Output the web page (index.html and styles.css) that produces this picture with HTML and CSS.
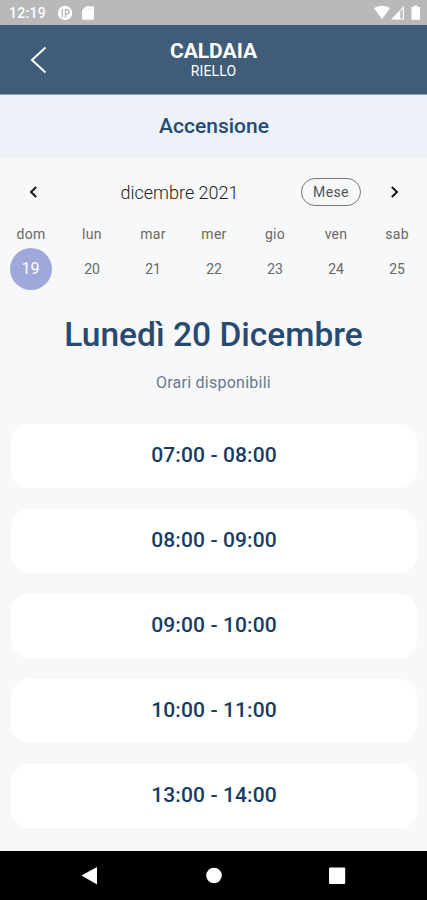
FILE: index.html
```html
<!DOCTYPE html>
<html lang="it">
<head>
<meta charset="utf-8">
<title>Caldaia</title>
<link rel="stylesheet" href="styles.css">
</head>
<body>
<div class="screen">
  <div class="status">
    <span class="clock">12:19</span>
    <svg class="status-left" width="40" height="25" viewBox="0 0 40 25">
      <circle cx="8" cy="13" r="7.2" fill="#fff"/>
      <path d="M5.300 9v8.500M8.500 17.800V9.500h1.300a2.300 2.300 0 0 1 0 4.600H8.500" fill="none" stroke="#b8b9ba" stroke-width="1.400"/>
      <path d="M29 6.2h7a1 1 0 0 1 1 1v11.500a1 1 0 0 1-1 1h-10a1 1 0 0 1-1-1V10.200z" fill="#fff"/>
      <path d="M29 8.500v2M31.500 8v2.500M34 8v2.500" stroke="#e2e2e3" stroke-width=".8"/>
    </svg>
    <svg class="status-right" width="48" height="25" viewBox="0 0 48 25">
      <path d="M0 8.300C4.500 4.800 11.500 4.800 16 8.300L8 19z" fill="#fff"/>
      <path d="M30 6v13.500H17z" fill="#fff"/>
      <path d="M26 11.200 29 8.500v10H26z" fill="#c6c7c8"/>
      <path d="M39.500 5.500h4V7H46v12.700h-8.500V7h2z" fill="#fff"/>
    </svg>
  </div>
  <header class="header">
    <svg class="back" width="18" height="28" viewBox="0 0 18 28"><path d="M15.500 1.500 2 14l13.500 12.500" fill="none" stroke="#fff" stroke-width="2"/></svg>
    <div class="titles"><h1>CALDAIA</h1><p>RIELLO</p></div>
  </header>
  <div class="mode">Accensione</div>
  <section class="calendar">
    <div class="month">
      <svg class="prev" width="9" height="12" viewBox="0 0 9 12"><path d="M7.200 1 2 6l5.200 5" fill="none" stroke="#151515" stroke-width="2"/></svg>
      <span class="month-name">dicembre 2021</span>
      <button class="toggle">Mese</button>
      <svg class="next" width="9" height="12" viewBox="0 0 9 12"><path d="M1.800 1 7 6l-5.200 5" fill="none" stroke="#151515" stroke-width="2"/></svg>
    </div>
    <div class="week">
      <span>dom</span><span>lun</span><span>mar</span><span>mer</span><span>gio</span><span>ven</span><span>sab</span>
    </div>
    <div class="week days">
      <span class="selected">19</span><span>20</span><span>21</span><span>22</span><span>23</span><span>24</span><span>25</span>
    </div>
  </section>
  <h2 class="date">Lunedì 20 Dicembre</h2>
  <p class="hint">Orari disponibili</p>
  <div class="slots">
    <div class="slot">07:00 - 08:00</div>
    <div class="slot">08:00 - 09:00</div>
    <div class="slot">09:00 - 10:00</div>
    <div class="slot">10:00 - 11:00</div>
    <div class="slot">13:00 - 14:00</div>
  </div>
  <nav class="navbar">
    <svg width="427" height="49" viewBox="0 0 427 49" fill="#fff">
      <path d="M81.500 24.500 97 16v17.500z"/>
      <circle cx="214" cy="24.500" r="7.800"/>
      <rect x="329" y="16.500" width="16.200" height="16.500" rx="1"/>
    </svg>
  </nav>
</div>
</body>
</html>
```
FILE: styles.css
```css
* { box-sizing: border-box; margin: 0; padding: 0; }
body { font-family: Roboto, "Liberation Sans", sans-serif; background: #f6f8fa; }
.screen { width: 427px; height: 900px; display: flex; flex-direction: column; overflow: hidden; }
.screen > * { flex-shrink: 0; }
svg { display: block; }
.status { height: 25px; background: #b8b9ba; display: flex; align-items: center; padding: 0 5px 0 9px; color: #fff; }
.clock { width: 48px; font-size: 14px; line-height: 25px; padding-top: 2px; letter-spacing: .3px; font-weight: 500; }
.status-right { margin-left: auto; }
.header { height: 70px; background: #3f5c78; border-bottom: 1px solid #8d9fb2; color: #fff; display: grid; grid-template-columns: 60px 1fr 60px; align-items: start; }
.back { margin: 21px 0 0 30px; }
.titles { text-align: center; padding-top: 14px; }
.titles h1 { font-size: 21px; line-height: 24px; font-weight: 700; }
.titles p { font-size: 14px; line-height: 17px; letter-spacing: .1px; }
.mode { height: 63px; background: #edf1f8; color: #284a70; font-size: 21px; font-weight: 500; line-height: 62px; text-align: center; padding-left: 1px; }
.calendar { height: 135px; color: #686868; }
.month { height: 68px; display: grid; grid-template-columns: 60px 239px 65px 63px; align-items: center; }
.prev { margin-left: 29px; }
.next { margin-left: 26px; }
.month-name { text-align: center; font-size: 18px; font-weight: 300; color: #222; }
.toggle { width: 60px; height: 28px; margin-left: 2px; border: 1px solid #777; border-radius: 14px; background: transparent; font: 14px Roboto, sans-serif; letter-spacing: .4px; color: #555; }
.week { display: grid; grid-template-columns: repeat(7, 61px); height: 17px; line-height: 17px; text-align: center; font-size: 14px; letter-spacing: .3px; }
.days { height: 42px; line-height: 42px; margin-top: 5px; letter-spacing: 0; }
.week span:not(.selected) { padding-left: 1px; }
.selected { width: 42px; height: 42px; justify-self: center; border-radius: 50%; background: #9fa8da; color: #fff; font-size: 16px; }
.date { margin-top: 20px; color: #284a70; font-size: 33.5px; font-weight: 500; line-height: 43px; height: 42px; text-align: center; }
.hint { margin-top: 18px; height: 20px; line-height: 20px; text-align: center; font-size: 16px; letter-spacing: .25px; color: #6a798b; }
.slots { display: flex; flex-direction: column; gap: 21px; margin: 31px 10px 0 11px; }
.slot { height: 64px; line-height: 62px; border-radius: 18px; background: #fff; color: #173b64; font-size: 21px; font-weight: 500; letter-spacing: .1px; text-align: center; }
.navbar { height: 49px; margin-top: auto; background: #000; }
```
